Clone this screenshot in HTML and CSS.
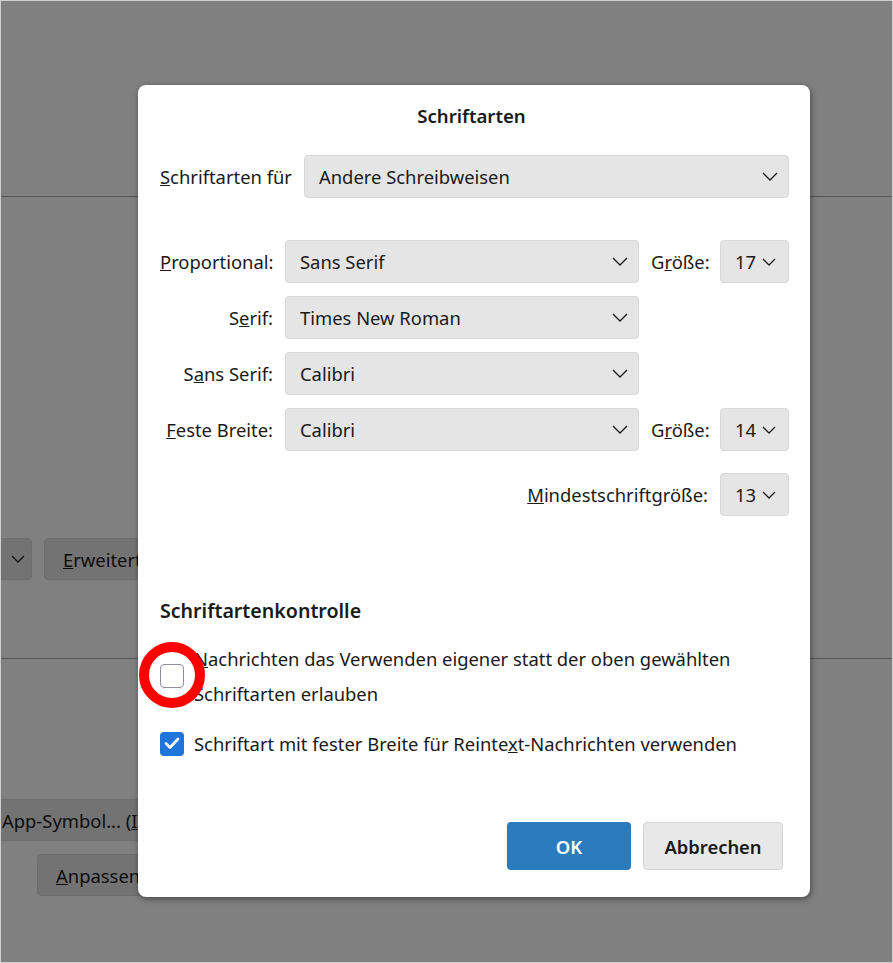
FILE: index.html
```html
<!DOCTYPE html>
<html lang="de">

<head>
    <meta charset="utf-8">
    <meta name="viewport" content="width=device-width, initial-scale=1.0">
    <title>Schriftarten</title>
    <link rel="stylesheet" href="styles.css">
</head>

<body>
    <div class="skaerm">
        <!-- siden bag dialogen, dæmpet -->
        <div class="bagside">
            <div class="streg streg-1"></div>
            <div class="bag-raekke">
                <div class="bag-vaelg">
                    <svg width="14" height="8" viewBox="0 0 14 8"><path d="M1 1l6 6 6-6" fill="none" stroke="#111" stroke-width="1.3"/></svg>
                </div>
                <div class="bag-knap"><u>E</u>rweitert...</div>
            </div>
            <div class="streg streg-2"></div>
            <div class="bag-knap bag-app">App-Symbol... (<u>I</u>)</div>
            <div class="bag-knap bag-anpassen"><u>A</u>npassen...</div>
        </div>

        <div class="dialog">
            <h1>Schriftarten</h1>

            <div class="for-raekke">
                <label><u>S</u>chriftarten für</label>
                <div class="vaelg bred">
                    <span>Andere Schreibweisen</span>
                    <svg width="16" height="9" viewBox="0 0 16 9"><path d="M1 1l7 7 7-7" fill="none" stroke="#1a1a1a" stroke-width="1.3"/></svg>
                </div>
            </div>

            <div class="skrift-gitter">
                <label><u>P</u>roportional:</label>
                <div class="vaelg">
                    <span>Sans Serif</span>
                    <svg width="16" height="9" viewBox="0 0 16 9"><path d="M1 1l7 7 7-7" fill="none" stroke="#1a1a1a" stroke-width="1.3"/></svg>
                </div>
                <label>G<u>r</u>öße:</label>
                <div class="vaelg lille">
                    <span>17</span>
                    <svg width="14" height="8" viewBox="0 0 14 8"><path d="M1 1l6 6 6-6" fill="none" stroke="#1a1a1a" stroke-width="1.3"/></svg>
                </div>

                <label>S<u>e</u>rif:</label>
                <div class="vaelg">
                    <span>Times New Roman</span>
                    <svg width="16" height="9" viewBox="0 0 16 9"><path d="M1 1l7 7 7-7" fill="none" stroke="#1a1a1a" stroke-width="1.3"/></svg>
                </div>
                <span></span>
                <span></span>

                <label>S<u>a</u>ns Serif:</label>
                <div class="vaelg">
                    <span>Calibri</span>
                    <svg width="16" height="9" viewBox="0 0 16 9"><path d="M1 1l7 7 7-7" fill="none" stroke="#1a1a1a" stroke-width="1.3"/></svg>
                </div>
                <span></span>
                <span></span>

                <label><u>F</u>este Breite:</label>
                <div class="vaelg">
                    <span>Calibri</span>
                    <svg width="16" height="9" viewBox="0 0 16 9"><path d="M1 1l7 7 7-7" fill="none" stroke="#1a1a1a" stroke-width="1.3"/></svg>
                </div>
                <label>G<u>r</u>öße:</label>
                <div class="vaelg lille">
                    <span>14</span>
                    <svg width="14" height="8" viewBox="0 0 14 8"><path d="M1 1l6 6 6-6" fill="none" stroke="#1a1a1a" stroke-width="1.3"/></svg>
                </div>

                <label class="mindest"><u>M</u>indestschriftgröße:</label>
                <div class="vaelg lille mindest-vaelg">
                    <span>13</span>
                    <svg width="14" height="8" viewBox="0 0 14 8"><path d="M1 1l6 6 6-6" fill="none" stroke="#1a1a1a" stroke-width="1.3"/></svg>
                </div>
            </div>

            <h2>Schriftartenkontrolle</h2>

            <div class="afkryds">
                <span class="boks"></span>
                <span class="tekst"><u>N</u>achrichten das Verwenden eigener statt der oben gewählten Schriftarten erlauben</span>
            </div>

            <div class="afkryds valgt">
                <span class="boks">
                    <svg width="16" height="13" viewBox="0 0 16 13"><path d="M2 6.5l4 4 8-8.5" fill="none" stroke="#fff" stroke-width="2.6" stroke-linecap="round" stroke-linejoin="round"/></svg>
                </span>
                <span class="tekst">Schriftart mit fester Breite für Reinte<u>x</u>t-Nachrichten verwenden</span>
            </div>

            <div class="knapper">
                <button class="ok">OK</button>
                <button class="annuller">Abbrechen</button>
            </div>

            <!-- rød markering oven på den første boks -->
            <div class="ring"></div>
        </div>
    </div>
</body>

</html>
```

FILE: styles.css
```css
body {
    margin: 0;
    font-family: "Segoe UI", "Noto Sans", sans-serif;
    font-size: 18.4px;
    color: #1a1a1a;
}

.skaerm {
    position: relative;
    width: 893px;
    height: 963px;
    box-sizing: border-box;
    border: 1px solid #cfcfcf;
    background-color: #808080;
    overflow: hidden;
}

/* bagside */

.bagside {
    color: #0d0d0d;
}

.streg {
    height: 1px;
    background-color: #555;
}

.streg-1 {
    margin-top: 195px;
}

.bag-raekke {
    display: flex;
    gap: 12px;
    margin-top: 341px;
}

.bag-vaelg {
    width: 60px;
    height: 42px;
    margin-left: -29px;
    box-sizing: border-box;
    border: 1px solid #6e6e6e;
    border-radius: 4px;
    background-color: #737373;
    display: flex;
    align-items: center;
    justify-content: flex-end;
    padding-right: 6px;
}

.bag-knap {
    height: 42px;
    box-sizing: border-box;
    border: 1px solid #6e6e6e;
    border-radius: 4px;
    background-color: #737373;
    display: flex;
    align-items: center;
    padding: 0 18px;
    white-space: nowrap;
}

.streg-2 {
    margin-top: 78px;
}

.bag-app {
    width: 200px;
    margin-top: 140px;
    margin-left: -10px;
    padding-left: 10px;
}

.bag-anpassen {
    width: 150px;
    margin-top: 13px;
    margin-left: 36px;
}

/* dialog */

.dialog {
    position: absolute;
    left: 137px;
    top: 84px;
    width: 672px;
    height: 812px;
    box-sizing: border-box;
    padding: 19px 27px 27px 22px;
    background-color: white;
    border-radius: 8px;
    box-shadow: 1px 2px 6px rgba(0, 0, 0, 0.45);
    display: flex;
    flex-direction: column;
}

h1 {
    margin: 0;
    font-size: 18.6px;
    line-height: 24px;
    font-weight: 600;
    text-align: center;
}

.for-raekke {
    display: flex;
    align-items: center;
    gap: 12px;
    margin-top: 27px;
    margin-right: -6px;
}

.for-raekke .vaelg {
    flex: 1;
}

.vaelg {
    height: 43px;
    box-sizing: border-box;
    border: 1px solid #d8d8d8;
    border-radius: 4px;
    background-color: #e5e5e5;
    display: flex;
    align-items: center;
    justify-content: space-between;
    padding: 0 10px 0 14px;
}

.skrift-gitter {
    display: grid;
    grid-template-columns: 113px 354px 57px 69px;
    column-gap: 12px;
    row-gap: 13px;
    align-items: center;
    margin-top: 42px;
    margin-right: -6px;
}

.skrift-gitter label {
    text-align: right;
    white-space: nowrap;
}

.vaelg.lille {
    padding: 0 12px 0 14px;
}

.mindest {
    grid-column: 1 / 4;
    margin-top: 9px;
}

.mindest-vaelg {
    margin-top: 9px;
}

h2 {
    margin: 83px 0 0;
    font-size: 19.6px;
    line-height: 24px;
    font-weight: 600;
}

.afkryds {
    display: flex;
    align-items: center;
    gap: 10px;
    line-height: 35px;
    margin-top: 18px;
}

.afkryds.valgt {
    margin-top: 15px;
}

.boks {
    flex: none;
    width: 24px;
    height: 24px;
    box-sizing: border-box;
    border: 1px solid #8f8f9d;
    border-radius: 4px;
    display: flex;
    align-items: center;
    justify-content: center;
}

.valgt .boks {
    border: none;
    background-color: #1f75d9;
}

.tekst {
    max-width: 580px;
}

.knapper {
    margin-top: auto;
    display: flex;
    justify-content: flex-end;
    gap: 12px;
}

button {
    height: 48px;
    font-family: inherit;
    font-size: 18.4px;
    font-weight: 600;
    border-radius: 4px;
}

.ok {
    width: 124px;
    background-color: #2a7cbe;
    color: white;
    border: none;
}

.annuller {
    width: 140px;
    background-color: #e8e8e8;
    color: #1a1a1a;
    border: 1px solid #d4d4d4;
}

.ring {
    position: absolute;
    left: 1px;
    top: 557px;
    width: 66px;
    height: 66px;
    box-sizing: border-box;
    border: 10px solid #ff0000;
    border-radius: 50%;
}
```
